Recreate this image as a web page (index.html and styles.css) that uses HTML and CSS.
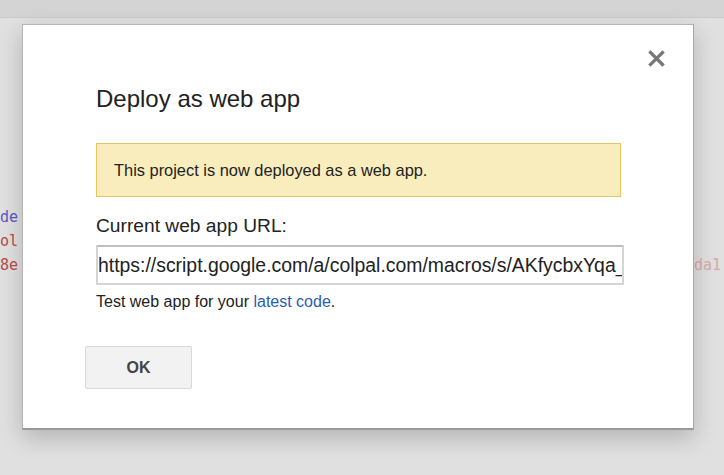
FILE: index.html
```html
<!DOCTYPE html>
<html lang="en">
<head>
    <meta charset="UTF-8">
    <meta name="viewport" content="width=device-width, initial-scale=1.0">
    <title>Deploy as web app</title>
    <link rel="stylesheet" href="styles.css">
</head>
<body>
    <!-- Editor behind the modal -->
    <div class="toolbar"></div>
    <div class="editor">
        <div class="code-col">
            <div class="code-line kw">de</div>
            <div class="code-line str">ol</div>
            <div class="code-line str">8e</div>
        </div>
        <div class="code-col right">
            <div class="code-line"></div>
            <div class="code-line"></div>
            <div class="code-line str faded">da1</div>
        </div>
    </div>

    <!-- Deploy dialog -->
    <div class="dialog">
        <button class="close" aria-label="Close">
            <svg width="17" height="17" viewBox="0 0 17 17">
                <path d="M2.5 2.5 L14.5 14.5 M14.5 2.5 L2.5 14.5" stroke="#777" stroke-width="3.2" stroke-linecap="square"/>
            </svg>
        </button>
        <h2 class="dialog-title">Deploy as web app</h2>
        <div class="notice">This project is now deployed as a web app.</div>
        <label class="field-label" for="url">Current web app URL:</label>
        <input class="url-input" id="url" type="text" readonly value="https://script.google.com/a/colpal.com/macros/s/AKfycbxYqa_  JmV0nq6cbR8eKzL/exec">
        <p class="hint">Test web app for your <a href="#">latest code</a>.</p>
        <div class="actions">
            <button class="btn">OK</button>
        </div>
    </div>
</body>
</html>
```

FILE: styles.css
```css
/* General Styles */
body {
    margin: 0;
    padding: 0;
    background-color: #e0e0e0;
    font-family: "Liberation Sans", Arial, sans-serif;
    color: #222;
    height: 475px;
    overflow: hidden;
}

/* Editor backdrop */
.toolbar {
    height: 17px;
    background: #d4d4d4;
    border-bottom: 1px solid #cbcbcb;
}

.editor {
    display: flex;
    justify-content: space-between;
    padding-top: 187px;
}

.code-col.right {
    padding-right: 3px;
}

.code-line {
    font-family: "DejaVu Sans Mono", monospace;
    font-size: 15px;
    line-height: 24px;
    height: 24px;
}

.kw {
    color: #5858c4;
}

.str {
    color: #b84a4a;
}

.faded {
    color: #d9a9a9;
}

/* Dialog */
.dialog {
    position: absolute;
    left: 22px;
    top: 24px;
    width: 597px;
    height: 344px;
    padding: 59px 0 0 73px;
    background: #fff;
    border: 1px solid #b4b4b4;
    border-bottom: 2px solid #9a9a9a;
    border-right-color: #a8a8a8;
    box-shadow: 0 8px 22px rgba(0, 0, 0, 0.2);
}

.close {
    position: absolute;
    top: 25px;
    right: 28px;
    padding: 0;
    border: 0;
    background: none;
    line-height: 0;
}

.dialog-title {
    margin: 0;
    font-size: 24px;
    font-weight: normal;
    line-height: 30px;
    color: #222;
}

.notice {
    margin-top: 29px;
    width: 506px;
    height: 52px;
    padding-left: 17px;
    background: #f9edbe;
    border: 1px solid #e6c65c;
    font-size: 16.4px;
    line-height: 52px;
    color: #222;
}

.field-label {
    display: block;
    margin-top: 16px;
    font-size: 19.2px;
    line-height: 26px;
}

.url-input {
    display: block;
    box-sizing: border-box;
    margin-top: 6px;
    width: 528px;
    height: 40px;
    padding: 0 0 0 0;
    border: 2px solid #d4d4d4;
    border-top-color: #c0c0c0;
    font-family: inherit;
    font-size: 19.4px;
    color: #222;
    outline: none;
}

.hint {
    margin: 7px 0 0;
    font-size: 16px;
    line-height: 20px;
}

.hint a {
    color: #2a5db0;
    text-decoration: none;
}

.actions {
    margin: 34px 0 0 -11px;
}

.btn {
    width: 107px;
    height: 43px;
    background: #f2f2f2;
    border: 1px solid #d9d9d9;
    border-radius: 2px;
    font-family: inherit;
    font-size: 16px;
    font-weight: bold;
    color: #444;
}
```
